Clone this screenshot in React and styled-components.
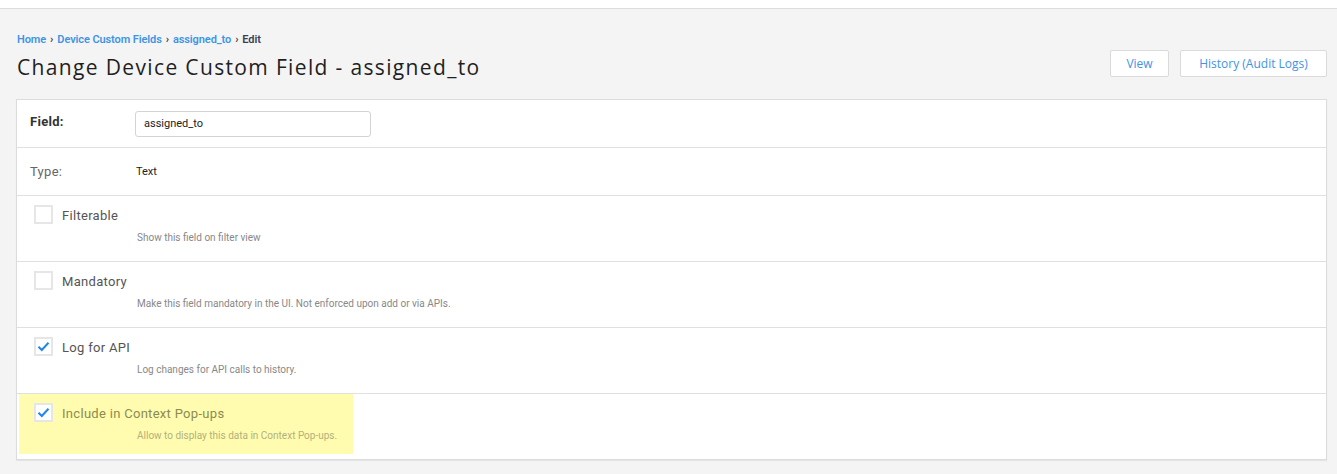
import styled, { createGlobalStyle } from "styled-components";

const GlobalStyle = createGlobalStyle`
  body {
    margin: 0;
    background: #f4f4f4;
    font-family: Roboto, "Liberation Sans", sans-serif;
  }
`;

const options = [
  { id: "filterable", label: "Filterable", help: "Show this field on filter view", checked: false },
  { id: "mandatory", label: "Mandatory", help: "Make this field mandatory in the UI. Not enforced upon add or via APIs.", checked: false },
  { id: "log", label: "Log for API", help: "Log changes for API calls to history.", checked: true },
  { id: "popups", label: "Include in Context Pop-ups", help: "Allow to display this data in Context Pop-ups.", checked: true, highlight: true },
];

function Check({ checked }) {
  return (
    <Box>
      {checked && (
        <svg width="13" height="11" viewBox="0 0 13 11">
          <path d="M1.5 5.8 L4.8 9 L11.5 1.8" fill="none" stroke="#1e88e5" strokeWidth="2" />
        </svg>
      )}
    </Box>
  );
}

export default function App() {
  return (
    <>
      <GlobalStyle />
      <TopBar />
      <Page>
        <Header>
          <div>
            <Crumbs>
              <CrumbLink>Home</CrumbLink>
              <Sep>›</Sep>
              <CrumbLink>Device Custom Fields</CrumbLink>
              <Sep>›</Sep>
              <CrumbLink>assigned_to</CrumbLink>
              <Sep>›</Sep>
              <Current>Edit</Current>
            </Crumbs>
            <Title>Change Device Custom Field - assigned_to</Title>
          </div>
          <Actions>
            <Button>View</Button>
            <Button $wide>History (Audit Logs)</Button>
          </Actions>
        </Header>
        <Panel>
          <FieldRow>
            <FieldLabel $bold>Field:</FieldLabel>
            <Input defaultValue="assigned_to" />
          </FieldRow>
          <FieldRow>
            <FieldLabel>Type:</FieldLabel>
            <Value>Text</Value>
          </FieldRow>
          {options.map((o) => (
            <CheckRow key={o.id}>
              <CheckArea $highlight={o.highlight}>
                <CheckLine>
                  <Check checked={o.checked} />
                  <CheckLabel $highlight={o.highlight}>{o.label}</CheckLabel>
                </CheckLine>
                <Help $highlight={o.highlight}>{o.help}</Help>
              </CheckArea>
            </CheckRow>
          ))}
        </Panel>
      </Page>
    </>
  );
}

const TopBar = styled.div`
  height: 8px;
  background: #fff;
  border-bottom: 1px solid #dcdcdc;
`;

const Page = styled.main`
  padding: 0 10px 14px 16px;
`;

const Header = styled.header`
  display: flex;
  justify-content: space-between;
  align-items: flex-start;
  height: 90px;
`;

const Crumbs = styled.nav`
  margin-top: 24px;
  display: flex;
  align-items: center;
  gap: 4px;
  font-family: Roboto, "Liberation Sans", sans-serif;
  font-size: 11px;
  font-weight: 600;
  letter-spacing: -0.1px;
  padding-left: 1px;
  height: 13px;
`;

const CrumbLink = styled.a`
  color: #3f94e4;
`;

const Sep = styled.span`
  color: #444;
  font-weight: 700;
`;

const Current = styled.span`
  color: #3a3f51;
`;

const Title = styled.h1`
  margin: 7px 0 0 1px;
  font-family: "Open Sans", sans-serif;
  font-weight: 400;
  font-size: 21px;
  color: #1f1f1f;
  letter-spacing: 1.35px;
`;

const Actions = styled.div`
  display: flex;
  gap: 11px;
  margin-top: 41px;
`;

const Button = styled.button`
  height: 27px;
  width: ${(p) => (p.$wide ? "147px" : "59px")};
  background: #fff;
  border: 1px solid #dadada;
  border-radius: 2px;
  color: #3f94e4;
  font-family: "Open Sans", sans-serif;
  font-size: 12px;
  padding: 0;
`;

const Panel = styled.section`
  background: #fff;
  border: 1px solid #dcdcdc;
  box-shadow: 0 1px 1px rgba(0, 0, 0, 0.06);
`;

const FieldRow = styled.div`
  display: flex;
  align-items: center;
  height: 47px;
  border-bottom: 1px solid #e0e0e0;
  padding-left: 13px;
`;

const FieldLabel = styled.div`
  width: 105px;
  font-size: 13px;
  font-weight: ${(p) => (p.$bold ? 700 : 400)};
  color: ${(p) => (p.$bold ? "#333" : "#666")};
  letter-spacing: 0.3px;
  margin-bottom: ${(p) => (p.$bold ? "4px" : "0")};
`;

const Input = styled.input`
  box-sizing: border-box;
  width: 236px;
  height: 26px;
  border: 1px solid #d4d4d4;
  border-radius: 3px;
  padding: 0 8px;
  font-family: Roboto, sans-serif;
  font-size: 11px;
  color: #222;
`;

const Value = styled.div`
  font-size: 11px;
  color: #222;
  padding-left: 1px;
`;

const CheckRow = styled.div`
  height: 65px;
  border-bottom: 1px solid #e0e0e0;
  &:last-child {
    border-bottom: none;
  }
`;

const CheckArea = styled.div`
  box-sizing: border-box;
  width: 334px;
  height: 60px;
  margin-left: 2px;
  padding: 9px 0 0 15px;
  background: ${(p) => (p.$highlight ? "#fffcb0" : "transparent")};
`;

const CheckLine = styled.div`
  display: flex;
  align-items: center;
  gap: 9px;
`;

const Box = styled.span`
  box-sizing: border-box;
  width: 19px;
  height: 19px;
  border: 2px solid #e6e6e6;
  background: #fff;
  display: flex;
  align-items: center;
  justify-content: center;
`;

const CheckLabel = styled.span`
  font-size: 13px;
  color: ${(p) => (p.$highlight ? "#8d8b4e" : "#555")};
  letter-spacing: 0.3px;
  margin-top: 1px;
`;

const Help = styled.div`
  margin: 8px 0 0 103px;
  font-size: 10px;
  white-space: nowrap;
  color: ${(p) => (p.$highlight ? "#b3b07a" : "#888")};
`;
